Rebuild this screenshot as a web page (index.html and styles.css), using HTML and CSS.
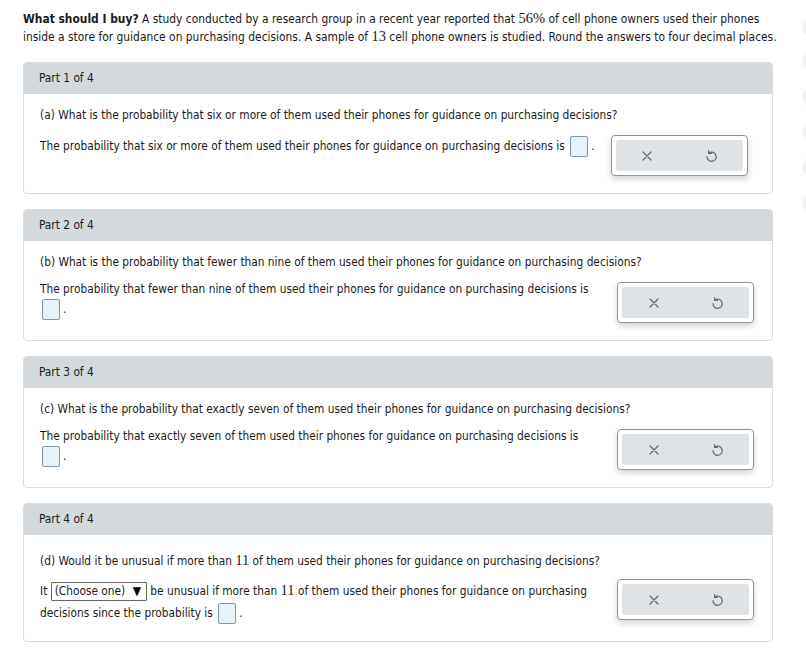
FILE: index.html
```html
<!DOCTYPE html>
<html>
<head>
<meta charset="utf-8">
<link rel="stylesheet" href="styles.css">
</head>
<body>
<div class="page">
  <p class="intro"><b>What should I buy?</b> A study conducted by a research group in a recent year reported that <span class="m">56%</span> of cell phone owners used their phones inside a store for guidance on purchasing decisions. A sample of <span class="m">13</span> cell phone owners is studied. Round the answers to four decimal places.</p>

  <section class="card">
    <div class="card-head">Part 1 of 4</div>
    <div class="card-body">
      <p class="q">(a) What is the probability that six or more of them used their phones for guidance on purchasing decisions?</p>
      <div class="row row1">
        <div class="ans">The probability that six or more of them used their phones for guidance on purchasing decisions is <span class="nw"><span class="box"></span><span class="dot">.</span></span></div>
        <div class="tools">
          <div class="tools-in">
            <svg class="ic" width="14" height="14" viewBox="0 0 14 14"><path d="M3 3L11 11M11 3L3 11" stroke="#5f6f7a" stroke-width="1.3" fill="none" stroke-linecap="round"/></svg>
            <svg class="ic" width="14" height="14" viewBox="0 0 14 14"><path d="M4.6 4.2A4.6 4.6 0 1 1 3 7.6" stroke="#5f6f7a" stroke-width="1.2" fill="none" stroke-linecap="round"/><path d="M4.6 1.6V4.4H7.4" stroke="#5f6f7a" stroke-width="1.2" fill="none" stroke-linecap="round" stroke-linejoin="round"/></svg>
          </div>
        </div>
      </div>
    </div>
  </section>

  <section class="card">
    <div class="card-head">Part 2 of 4</div>
    <div class="card-body">
      <p class="q">(b) What is the probability that fewer than nine of them used their phones for guidance on purchasing decisions?</p>
      <div class="row">
        <div class="ans">The probability that fewer than nine of them used their phones for guidance on purchasing decisions is <span class="nw"><span class="box"></span><span class="dot">.</span></span></div>
        <div class="tools">
          <div class="tools-in">
            <svg class="ic" width="14" height="14" viewBox="0 0 14 14"><path d="M3 3L11 11M11 3L3 11" stroke="#5f6f7a" stroke-width="1.3" fill="none" stroke-linecap="round"/></svg>
            <svg class="ic" width="14" height="14" viewBox="0 0 14 14"><path d="M4.6 4.2A4.6 4.6 0 1 1 3 7.6" stroke="#5f6f7a" stroke-width="1.2" fill="none" stroke-linecap="round"/><path d="M4.6 1.6V4.4H7.4" stroke="#5f6f7a" stroke-width="1.2" fill="none" stroke-linecap="round" stroke-linejoin="round"/></svg>
          </div>
        </div>
      </div>
    </div>
  </section>

  <section class="card">
    <div class="card-head">Part 3 of 4</div>
    <div class="card-body">
      <p class="q">(c) What is the probability that exactly seven of them used their phones for guidance on purchasing decisions?</p>
      <div class="row">
        <div class="ans">The probability that exactly seven of them used their phones for guidance on purchasing decisions is <span class="nw"><span class="box"></span><span class="dot">.</span></span></div>
        <div class="tools">
          <div class="tools-in">
            <svg class="ic" width="14" height="14" viewBox="0 0 14 14"><path d="M3 3L11 11M11 3L3 11" stroke="#5f6f7a" stroke-width="1.3" fill="none" stroke-linecap="round"/></svg>
            <svg class="ic" width="14" height="14" viewBox="0 0 14 14"><path d="M4.6 4.2A4.6 4.6 0 1 1 3 7.6" stroke="#5f6f7a" stroke-width="1.2" fill="none" stroke-linecap="round"/><path d="M4.6 1.6V4.4H7.4" stroke="#5f6f7a" stroke-width="1.2" fill="none" stroke-linecap="round" stroke-linejoin="round"/></svg>
          </div>
        </div>
      </div>
    </div>
  </section>

  <section class="card">
    <div class="card-head">Part 4 of 4</div>
    <div class="card-body">
      <p class="q q4">(d) Would it be unusual if more than <span class="m">11</span> of them used their phones for guidance on purchasing decisions?</p>
      <div class="row row4">
        <div class="ans">It <span class="sel">(Choose one) <span class="tri">▼</span></span> be unusual if more than <span class="m">11</span> of them used their phones for guidance on purchasing decisions since the probability is <span class="nw"><span class="box"></span><span class="dot">.</span></span></div>
        <div class="tools">
          <div class="tools-in">
            <svg class="ic" width="14" height="14" viewBox="0 0 14 14"><path d="M3 3L11 11M11 3L3 11" stroke="#5f6f7a" stroke-width="1.3" fill="none" stroke-linecap="round"/></svg>
            <svg class="ic" width="14" height="14" viewBox="0 0 14 14"><path d="M4.6 4.2A4.6 4.6 0 1 1 3 7.6" stroke="#5f6f7a" stroke-width="1.2" fill="none" stroke-linecap="round"/><path d="M4.6 1.6V4.4H7.4" stroke="#5f6f7a" stroke-width="1.2" fill="none" stroke-linecap="round" stroke-linejoin="round"/></svg>
          </div>
        </div>
      </div>
    </div>
  </section>
</div>

<div class="rail">
  <span></span><span></span><span></span><span></span><span></span><span></span>
</div>
</body>
</html>
```

FILE: styles.css
```css
html, body {
  margin: 0;
  padding: 0;
  background: #ffffff;
  overflow: hidden;
}
body {
  font-family: "DejaVu Sans Condensed", "DejaVu Sans", sans-serif;
  font-size: 11.8px;
  color: #1a1a1a;
}
.page {
  width: 750px;
  padding: 10px 0 0 23px;
}
.intro {
  width: 760px;
  margin: 0 0 16px 0;
  line-height: 18px;
  font-size: 11.9px;
}
.intro b {
  font-weight: bold;
}
.m {
  font-family: "Liberation Serif", "DejaVu Serif", serif;
  font-size: 14.5px;
  line-height: 1;
}
.nw {
  white-space: nowrap;
}
.card {
  border: 1px solid #d7dcdf;
  border-radius: 4px;
  margin-bottom: 15px;
  overflow: hidden;
}
.card-head {
  background: #d3d9dc;
  height: 31px;
  line-height: 31px;
  padding-left: 15px;
}
.card-body {
  padding: 13px 16px 17px 16px;
}
.q {
  margin: 0 0 12px 0;
  line-height: 16px;
}
.q4 {
  padding-top: 5px;
  margin-bottom: 10px;
}
.row {
  display: flex;
  align-items: flex-start;
}
.ans {
  max-width: 561px;
  line-height: 20px;
  margin-top: -3px;
}
.row1 .ans {
  margin-top: 1px;
}
.row4 .ans {
  margin-top: 1px;
  line-height: 22px;
}
.box {
  display: inline-block;
  width: 16px;
  height: 19px;
  border: 1px solid #7a9ab0;
  border-radius: 2px;
  background: #e8f3f9;
  vertical-align: middle;
  margin-left: 2px;
}
.dot {
  margin-left: 3px;
}
.sel {
  display: inline-block;
  border: 1px solid #666;
  height: 17px;
  line-height: 17px;
  padding: 0 5px 0 3px;
  vertical-align: middle;
  border-radius: 1px;
}
.tri {
  font-size: 12px;
  margin-left: 4px;
  color: #000;
}
.tools {
  margin-left: 16px;
  flex: none;
  width: 135px;
  height: 39px;
  border: 1px solid #8798a3;
  border-radius: 4px;
  box-shadow: 0 3px 6px rgba(0,0,0,0.18);
  display: flex;
  align-items: center;
  justify-content: center;
  background: #fff;
}
.tools-in {
  width: 127px;
  height: 31px;
  background: #dfe3e6;
  border-radius: 3px;
  display: flex;
  align-items: center;
  justify-content: space-around;
}
.rail {
  position: absolute;
  top: 17px;
  left: 802px;
  display: flex;
  flex-direction: column;
  gap: 15px;
}
.rail span {
  display: block;
  width: 20px;
  height: 20px;
  border-radius: 50%;
  background: #f2f3f5;
}
```
